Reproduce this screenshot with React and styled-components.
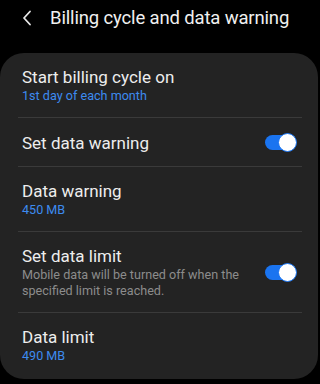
import styled, { createGlobalStyle } from 'styled-components';

const GlobalStyle = createGlobalStyle`
  html, body {
    margin: 0;
    padding: 0;
    background: #000;
  }
  body {
    font-family: Roboto, "Noto Sans", sans-serif;
    -webkit-font-smoothing: antialiased;
  }
`;

const rows = [
  { title: 'Start billing cycle on', value: '1st day of each month' },
  { title: 'Set data warning', toggle: true },
  { title: 'Data warning', value: '450 MB' },
  { title: 'Set data limit', desc: 'Mobile data will be turned off when the specified limit is reached.', toggle: true },
  { title: 'Data limit', value: '490 MB' },
];

const App = () => {
  return (
    <Screen>
      <GlobalStyle />
      <Header>
        <BackButton aria-label="back">
          <svg width="10" height="16" viewBox="0 0 10 16">
            <path d="M8 1.5 L2 8 L8 14.5" fill="none" stroke="#e8e8e8" strokeWidth="1.8" strokeLinecap="round" strokeLinejoin="round" />
          </svg>
        </BackButton>
        <Title>Billing cycle and data warning</Title>
      </Header>
      <Card>
        {rows.map((row, i) => (
          <Row key={row.title} last={i === rows.length - 1 ? 1 : 0} compact={!row.value && !row.desc ? 1 : 0}>
            <RowText>
              <RowTitle>{row.title}</RowTitle>
              {row.value ? <RowValue>{row.value}</RowValue> : ''}
              {row.desc ? <RowDesc>{row.desc}</RowDesc> : ''}
            </RowText>
            {row.toggle ? <Toggle on={1}><Knob /></Toggle> : ''}
          </Row>
        ))}
      </Card>
    </Screen>
  );
};

const Screen = styled.div`
  width: 320px;
  height: 384px;
  background: #000;
  overflow: hidden;
`;

const Header = styled.div`
  height: 35px;
  display: flex;
  align-items: center;
  padding-left: 20px;
  padding-bottom: 1px;
`;

const BackButton = styled.div`
  width: 14px;
  height: 18px;
  display: flex;
  align-items: center;
  justify-content: center;
  margin-right: 16px;
`;

const Title = styled.h1`
  margin: 0;
  font-size: 18.5px;
  font-weight: 400;
  color: #f0f0f0;
  letter-spacing: -0.15px;
`;

const Card = styled.div`
  margin-top: 17px;
  width: 318px;
  background: #232323;
  border-radius: 24px;
`;

const Row = styled.div`
  display: flex;
  align-items: center;
  margin: 0 16px 0 18px;
  padding: 13px 0 ${({ compact, last }) => last ? '15px' : compact ? '12px' : '13px'} 4px;
  border-bottom: ${({ last }) => last ? 'none' : '1px solid #3a3a3a'};
  min-height: ${({ compact }) => compact ? '23px' : '38px'};
`;

const RowText = styled.div`
  flex: 1;
  min-width: 0;
`;

const RowTitle = styled.div`
  font-size: 17px;
  line-height: 22px;
  color: #ededed;
`;

const RowValue = styled.div`
  font-size: 12.6px;
  line-height: 16px;
  color: #3d8bf0;
`;

const RowDesc = styled.div`
  font-size: 12.6px;
  line-height: 16px;
  color: #8c8c8c;
  padding-right: 20px;
`;

const Toggle = styled.div`
  position: relative;
  width: 31px;
  height: 15px;
  border-radius: 8px;
  background: ${({ on }) => on ? '#1a74f0' : '#555'};
  margin-right: 6px;
  flex-shrink: 0;
`;

const Knob = styled.div`
  position: absolute;
  right: -1px;
  top: -2px;
  width: 17px;
  height: 17px;
  border-radius: 50%;
  background: #fff;
  border: 1px solid #1a74f0;
`;

export default App;
